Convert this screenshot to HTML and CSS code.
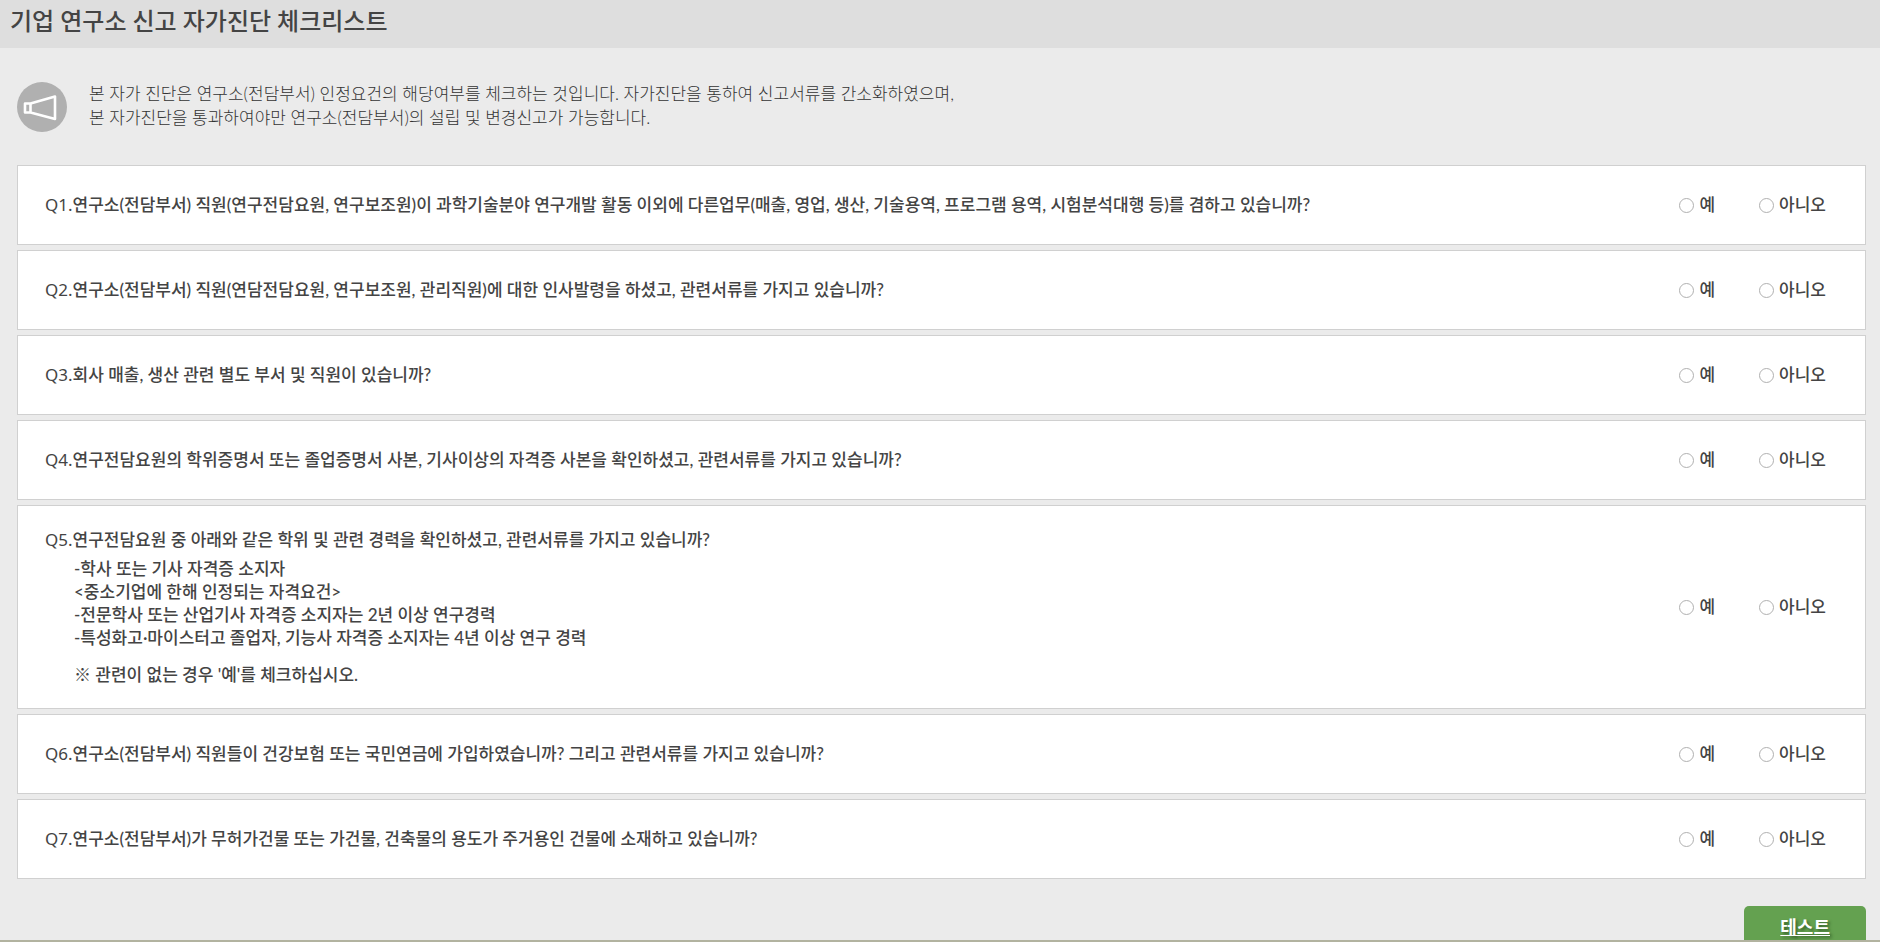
FILE: index.html
```html
<!DOCTYPE html>
<html lang="ko">
<head>
<meta charset="utf-8">
<title>기업 연구소 신고 자가진단 체크리스트</title>
<link rel="stylesheet" href="styles.css">
</head>
<body>
<header class="page-header"><h1 class="page-title">기업 연구소 신고 자가진단 체크리스트</h1></header>
<main class="content">
  <section class="intro">
    <svg class="intro-icon" viewBox="0 0 50 50" aria-hidden="true">
      <circle cx="25" cy="25" r="25" fill="#b0b0b0"/>
      <path d="M8 21.5 13.5 21.5 38 14.5V37L13.5 30.5H8ZM13.5 21.5V30.5" fill="none" stroke="#fff" stroke-width="2.6" stroke-linejoin="round"/>
    </svg>
    <p class="intro-text">본 자가 진단은 연구소(전담부서) 인정요건의 해당여부를 체크하는 것입니다. 자가진단을 통하여 신고서류를 간소화하였으며,<br>본 자가진단을 통과하여야만 연구소(전담부서)의 설립 및 변경신고가 가능합니다.</p>
  </section>
  <form class="checklist">
    <ol class="questions">
      <li class="question" role="radiogroup" aria-labelledby="q1">
        <p class="question-text" id="q1"><span class="number">Q1.</span>연구소(전담부서) 직원(연구전담요원, 연구보조원)이 과학기술분야 연구개발 활동 이외에 다른업무(매출, 영업, 생산, 기술용역, 프로그램 용역, 시험분석대행 등)를 겸하고 있습니까?</p>
        <div class="answers"><label class="answer"><input class="radio" type="radio" name="q1" value="y">예</label><label class="answer"><input class="radio" type="radio" name="q1" value="n">아니오</label></div>
      </li>
      <li class="question" role="radiogroup" aria-labelledby="q2">
        <p class="question-text" id="q2"><span class="number">Q2.</span>연구소(전담부서) 직원(연담전담요원, 연구보조원, 관리직원)에 대한 인사발령을 하셨고, 관련서류를 가지고 있습니까?</p>
        <div class="answers"><label class="answer"><input class="radio" type="radio" name="q2" value="y">예</label><label class="answer"><input class="radio" type="radio" name="q2" value="n">아니오</label></div>
      </li>
      <li class="question" role="radiogroup" aria-labelledby="q3">
        <p class="question-text" id="q3"><span class="number">Q3.</span>회사 매출, 생산 관련 별도 부서 및 직원이 있습니까?</p>
        <div class="answers"><label class="answer"><input class="radio" type="radio" name="q3" value="y">예</label><label class="answer"><input class="radio" type="radio" name="q3" value="n">아니오</label></div>
      </li>
      <li class="question" role="radiogroup" aria-labelledby="q4">
        <p class="question-text" id="q4"><span class="number">Q4.</span>연구전담요원의 학위증명서 또는 졸업증명서 사본, 기사이상의 자격증 사본을 확인하셨고, 관련서류를 가지고 있습니까?</p>
        <div class="answers"><label class="answer"><input class="radio" type="radio" name="q4" value="y">예</label><label class="answer"><input class="radio" type="radio" name="q4" value="n">아니오</label></div>
      </li>
      <li class="question" role="radiogroup" aria-labelledby="q5">
        <div class="question-body">
          <p class="question-text" id="q5"><span class="number">Q5.</span>연구전담요원 중 아래와 같은 학위 및 관련 경력을 확인하셨고, 관련서류를 가지고 있습니까?</p>
          <p class="details">-학사 또는 기사 자격증 소지자<br>&lt;중소기업에 한해 인정되는 자격요건&gt;<br>-전문학사 또는 산업기사 자격증 소지자는 2년 이상 연구경력<br>-특성화고·마이스터고 졸업자, 기능사 자격증 소지자는 4년 이상 연구 경력</p>
          <p class="details note">※ 관련이 없는 경우 '예'를 체크하십시오.</p>
        </div>
        <div class="answers"><label class="answer"><input class="radio" type="radio" name="q5" value="y">예</label><label class="answer"><input class="radio" type="radio" name="q5" value="n">아니오</label></div>
      </li>
      <li class="question" role="radiogroup" aria-labelledby="q6">
        <p class="question-text" id="q6"><span class="number">Q6.</span>연구소(전담부서) 직원들이 건강보험 또는 국민연금에 가입하였습니까? 그리고 관련서류를 가지고 있습니까?</p>
        <div class="answers"><label class="answer"><input class="radio" type="radio" name="q6" value="y">예</label><label class="answer"><input class="radio" type="radio" name="q6" value="n">아니오</label></div>
      </li>
      <li class="question" role="radiogroup" aria-labelledby="q7">
        <p class="question-text" id="q7"><span class="number">Q7.</span>연구소(전담부서)가 무허가건물 또는 가건물, 건축물의 용도가 주거용인 건물에 소재하고 있습니까?</p>
        <div class="answers"><label class="answer"><input class="radio" type="radio" name="q7" value="y">예</label><label class="answer"><input class="radio" type="radio" name="q7" value="n">아니오</label></div>
      </li>
    </ol>
    <div class="actions"><button class="submit" type="submit">테스트</button></div>
  </form>
</main>
</body>
</html>
```

FILE: styles.css
```css
* { box-sizing: border-box; }
body {
  display: flex;
  flex-direction: column;
  height: 100vh;
  margin: 0;
  overflow: hidden;
  border-bottom: 2px solid #b2b3a0;
  background: #ebebeb;
  color: #444;
  font-family: Lato, "Noto Sans CJK KR", sans-serif;
  font-size: 17px;
}
h1, p, ol { margin: 0; padding: 0; }
.page-header {
  flex: none;
  padding: 3px 10px 9px;
  background: #dedede;
}
.page-title {
  font-size: 24px;
  font-weight: 500;
  line-height: 36px;
}
.content {
  flex: 1;
  min-height: 0;
  padding: 34px 14px 0 17px;
  overflow: hidden;
}
.intro {
  display: flex;
  gap: 22px;
  margin-bottom: 33px;
}
.intro-icon {
  flex: none;
  width: 50px;
  height: 50px;
}
.intro-text {
  color: #333;
  font-weight: 300;
  line-height: 24px;
}
.questions {
  display: flex;
  flex-direction: column;
  gap: 5px;
  list-style: none;
}
.question {
  display: flex;
  align-items: center;
  justify-content: space-between;
  gap: 24px;
  min-height: 80px;
  padding: 22px 39px 22px 27px;
  border: 1px solid #d0d0d0;
  background: #fff;
  font-weight: 500;
}
.question-text { line-height: 24px; }
.number {
  font-family: "Noto Sans", sans-serif;
  font-weight: 400;
  line-height: 1;
}
.details {
  margin-top: 5px;
  padding-left: 29px;
  line-height: 23px;
}
.note { margin-top: 14px; }
.answers {
  display: flex;
  flex: none;
  gap: 44px;
  line-height: 24px;
}
.answer {
  display: flex;
  align-items: center;
  gap: 5px;
}
.radio {
  width: 15px;
  height: 15px;
  margin: 0;
  border: 1px solid #b0b0b0;
  border-radius: 50%;
  background: #fff;
  appearance: none;
}
.radio:checked { box-shadow: inset 0 0 0 3px #fff; background: #444; }
.actions {
  display: flex;
  justify-content: flex-end;
  padding-top: 27px;
}
.submit {
  padding: 8px 36px;
  border: 0;
  border-radius: 5px;
  background: #64a150;
  color: #fff;
  font-family: inherit;
  font-size: 18px;
  font-weight: 700;
  line-height: 26px;
  text-decoration: underline;
  text-shadow: 2px 2px 3px #355f28;
}
```
